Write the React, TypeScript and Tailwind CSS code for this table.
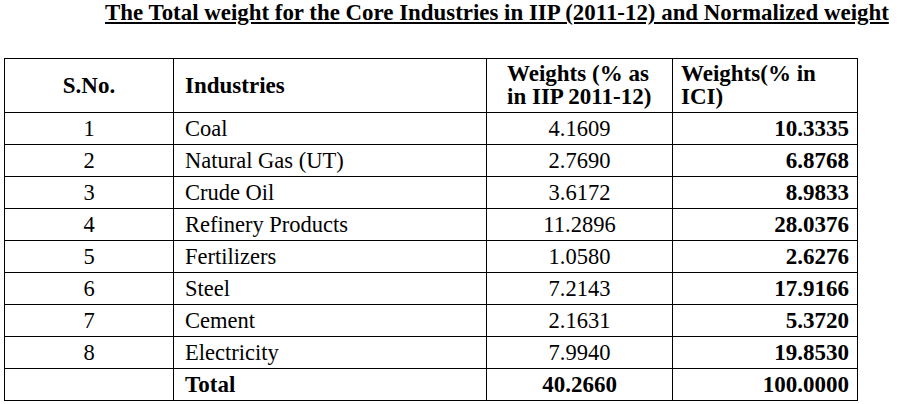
import React from "react";

const rows: [string, string, string, string][] = [
  ["1", "Coal", "4.1609", "10.3335"],
  ["2", "Natural Gas (UT)", "2.7690", "6.8768"],
  ["3", "Crude Oil", "3.6172", "8.9833"],
  ["4", "Refinery Products", "11.2896", "28.0376"],
  ["5", "Fertilizers", "1.0580", "2.6276"],
  ["6", "Steel", "7.2143", "17.9166"],
  ["7", "Cement", "2.1631", "5.3720"],
  ["8", "Electricity", "7.9940", "19.8530"],
];

export default function App() {
  return (
    <div
      className="w-[899px] h-[404px] bg-white text-black overflow-hidden"
      style={{ fontFamily: '"Liberation Serif", "Times New Roman", serif' }}
    >
      <div className="h-[58px] pt-[1px] pl-[105px]">
        <div className="text-[22.9px] leading-[24px] font-bold underline whitespace-nowrap">
          The Total weight for the Core Industries in IIP (2011-12) and Normalized weight
        </div>
      </div>
      <table className="ml-[4px] table-fixed border-collapse text-[22.5px]">
        <colgroup>
          <col className="w-[169px]" />
          <col className="w-[313px]" />
          <col className="w-[186px]" />
          <col className="w-[185px]" />
        </colgroup>
        <thead>
          <tr className="h-[54px] font-bold text-[23px]">
            <td className="border border-black text-center leading-[23px] p-0">S.No.</td>
            <td className="border border-black text-left leading-[23px] pl-[11px] p-0">Industries</td>
            <td className="border border-black text-left leading-[23px] pl-[20px] p-0 pb-[2px]">
              Weights (% as<br />in IIP 2011-12)
            </td>
            <td className="border border-black text-left leading-[23px] pl-[8px] p-0 pb-[2px]">
              Weights(% in<br />ICI)
            </td>
          </tr>
        </thead>
        <tbody>
          {rows.map((r) => (
            <tr key={r[0]} className="h-[32px]">
              <td className="border border-black text-center p-0 leading-[24px]">{r[0]}</td>
              <td className="border border-black text-left p-0 pl-[11px] leading-[24px]">{r[1]}</td>
              <td className="border border-black text-center p-0 leading-[24px]">{r[2]}</td>
              <td className="border border-black text-right p-0 pr-[8px] font-bold text-[23px] leading-[24px]">{r[3]}</td>
            </tr>
          ))}
          <tr className="h-[32px] font-bold text-[23px]">
            <td className="border border-black p-0"></td>
            <td className="border border-black text-left p-0 pl-[11px] leading-[24px]">Total</td>
            <td className="border border-black text-center p-0 leading-[24px]">40.2660</td>
            <td className="border border-black text-right p-0 pr-[8px] leading-[24px]">100.0000</td>
          </tr>
        </tbody>
      </table>
    </div>
  );
}
